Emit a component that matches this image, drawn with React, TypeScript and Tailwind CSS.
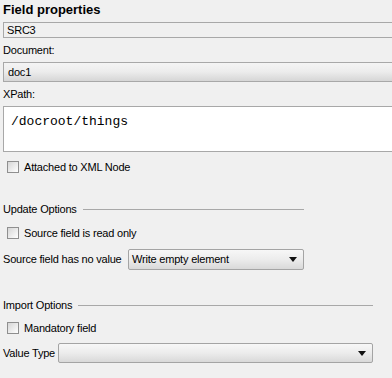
import React from "react";

const font = { fontFamily: "Tahoma, 'Liberation Sans', Arial, sans-serif" };

function Check({ label }: { label: string }) {
  return (
    <div className="flex items-center h-[14px] pl-[7px] gap-[5px]">
      <span className="block w-[12px] h-[12px] border border-[#8f8f8f] bg-gradient-to-br from-[#d6d6d6] to-white" />
      <span>{label}</span>
    </div>
  );
}

function Combo({ value, className }: { value: string; className: string }) {
  return (
    <div
      className={`flex items-center justify-between border border-[#a4a4a4] rounded-[2px] bg-gradient-to-b from-[#f7f7f7] via-[#ececec] to-[#d9d9d9] pl-[3px] pr-[6px] ${className}`}
    >
      <span>{value}</span>
      <svg width="8" height="5" viewBox="0 0 8 5">
        <path d="M0 0h8L4 5z" fill="#111" />
      </svg>
    </div>
  );
}

function Group({ title, width }: { title: string; width: string }) {
  return (
    <div className={`flex items-center h-[14px] ml-[3px] gap-[6px] ${width}`}>
      <span>{title}</span>
      <span className="block h-px flex-1 bg-[#a8a8a8]" />
    </div>
  );
}

export default function App() {
  return (
    <div
      className="w-[392px] h-[378px] bg-[#f0f0f0] text-[11px] tracking-[-0.2px] text-black flex flex-col overflow-hidden"
      style={font}
    >
      <div className="h-[20px] pt-[2px] pl-[3px] text-[13px] tracking-normal font-bold leading-[16px]">Field properties</div>
      <div className="ml-[3px] mt-[2px] h-[16px] border border-r-0 border-[#a8a8a8] flex items-center pl-[3px]">
        SRC3
      </div>
      <div className="h-[24px] pl-[3px] flex items-center">Document:</div>
      <div className="ml-[3px] h-[20px] border border-r-0 border-[#a8a8a8] flex items-center pl-[4px] bg-gradient-to-b from-[#f4f4f4] via-[#ececec] to-[#d6d6d6]">
        doc1
      </div>
      <div className="h-[24px] pl-[3px] flex items-center">XPath:</div>
      <div
        className="ml-[3px] h-[46px] border border-r-0 border-[#a8a8a8] bg-white pl-[7px] pt-[5px] text-[13px] tracking-normal"
        style={{ fontFamily: "'Liberation Mono', 'DejaVu Sans Mono', monospace" }}
      >
        /docroot/things
      </div>
      <div className="mt-[8px]">
        <Check label="Attached to XML Node" />
      </div>
      <div className="mt-[28px]">
        <Group title="Update Options" width="w-[301px]" />
      </div>
      <div className="mt-[10px]">
        <Check label="Source field is read only" />
      </div>
      <div className="mt-[9px] ml-[3px] w-[301px] flex items-center justify-between">
        <span>Source field has no value</span>
        <Combo value="Write empty element" className="w-[176px] h-[21px]" />
      </div>
      <div className="mt-[28px]">
        <Group title="Import Options" width="w-[370px]" />
      </div>
      <div className="mt-[9px]">
        <Check label="Mandatory field" />
      </div>
      <div className="mt-[8px] ml-[3px] w-[370px] flex items-center justify-between">
        <span>Value Type</span>
        <Combo value="" className="w-[315px] h-[20px]" />
      </div>
    </div>
  );
}
